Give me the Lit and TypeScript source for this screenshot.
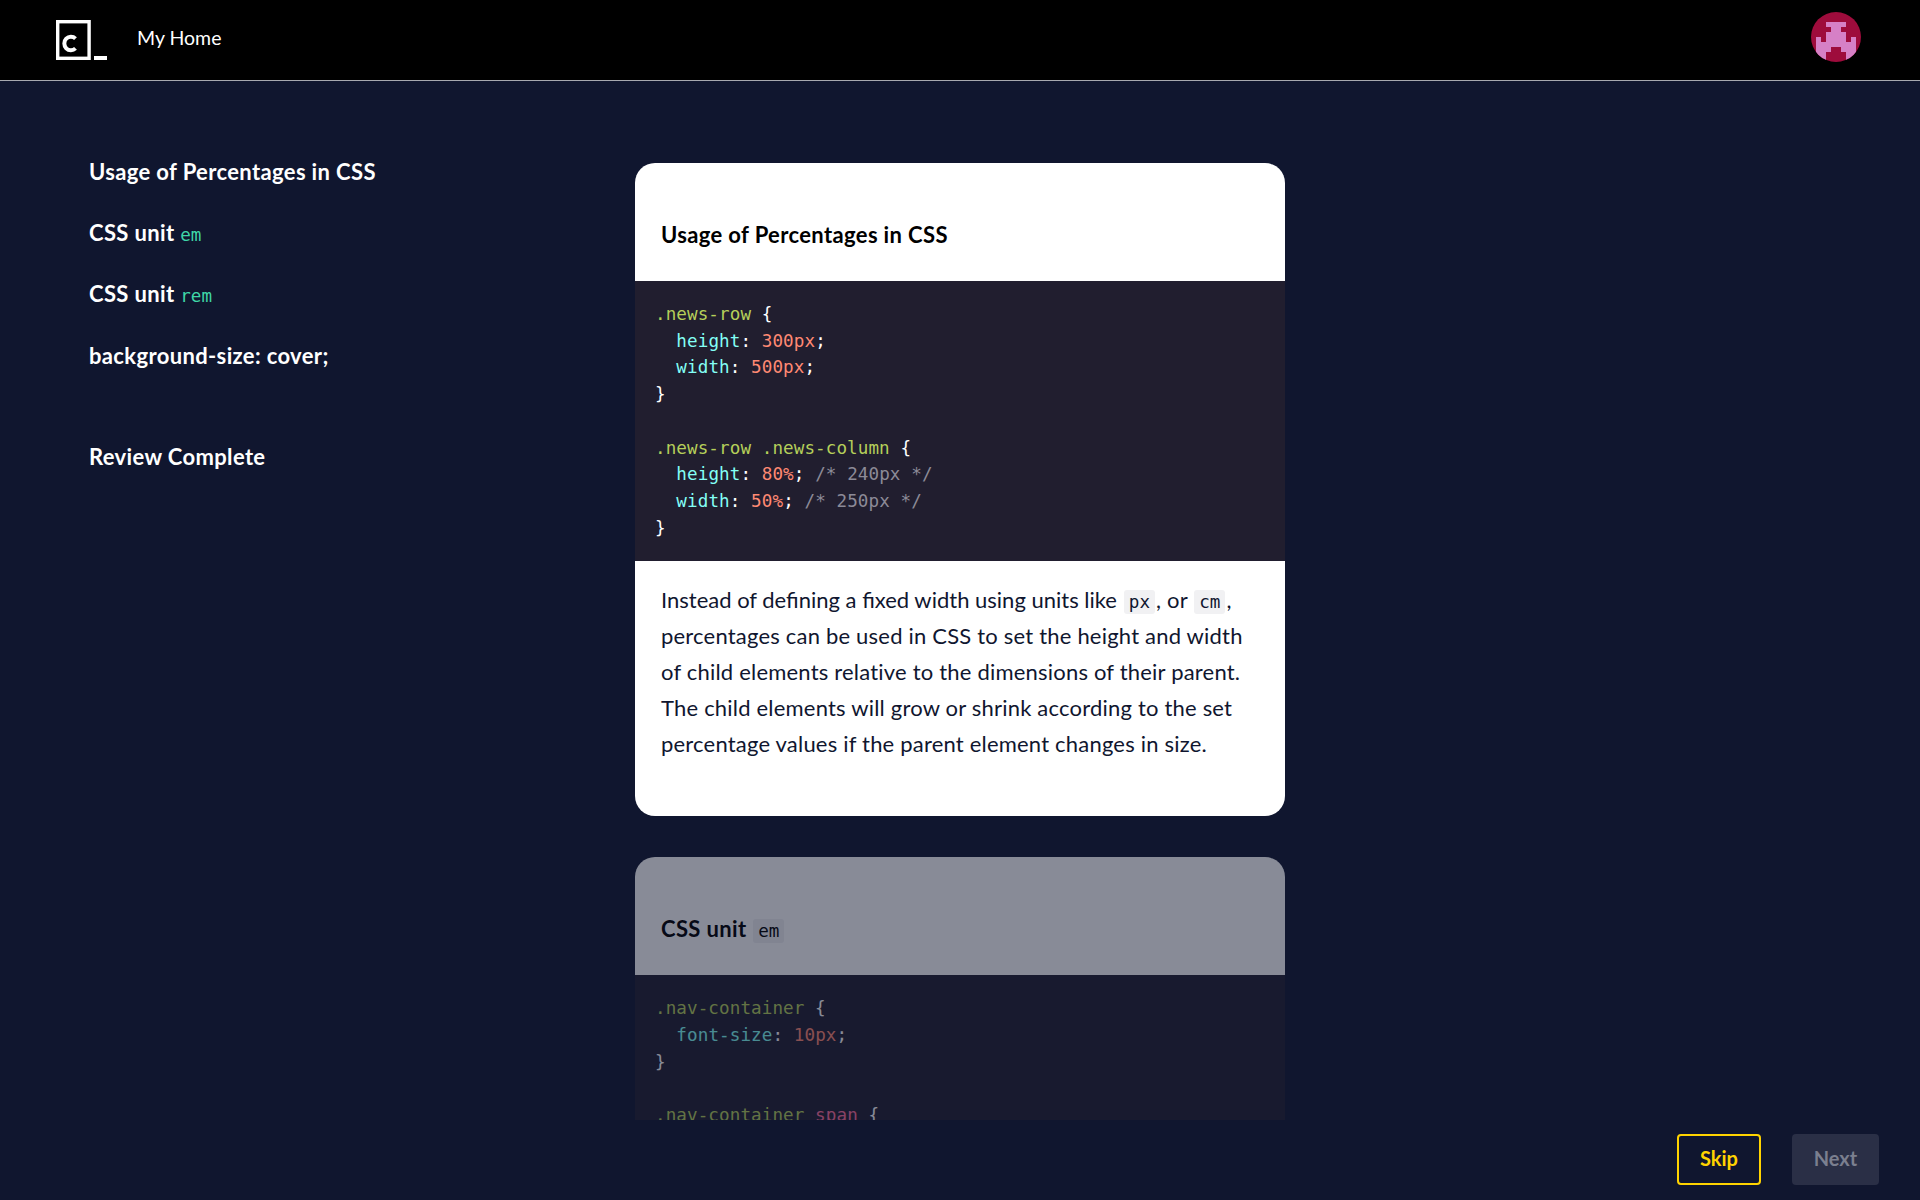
import { LitElement, html, css } from "lit";
import { customElement } from "lit/decorators.js";

const s = (c: string, t: string) => html`<span class=${c}>${t}</span>`;

@customElement("app-root")
export class AppRoot extends LitElement {
  static styles = css`
    :host {
      display: flex;
      flex-direction: column;
      height: 1200px;
      overflow: hidden;
      background: #10162f;
      font-family: "Lato", "Liberation Sans", sans-serif;
      color: #fff;
    }
    header {
      flex: none;
      height: 74px;
      border-bottom: 1px solid #a8a9b0;
      background: #000;
      display: flex;
      align-items: center;
      justify-content: space-between;
      padding: 0 59px 6px 56px;
    }
    .brand {
      display: flex;
      align-items: center;
      gap: 30px;
      font-size: 19.5px;
    }
    .logo {
      display: block;
      margin-top: 6px;
    }
    .avatar {
      display: block;
    }
    .content {
      flex: none;
      height: 1039px;
      display: flex;
      overflow: hidden;
    }
    nav {
      flex: none;
      width: 635px;
      padding: 76px 0 0 89px;
      box-sizing: border-box;
      font-size: 22px;
      font-weight: 700;
      letter-spacing: 0.36px;
    }
    nav div {
      height: 61.2px;
      line-height: 30px;
    }
    nav .review {
      margin-top: 40.5px;
    }
    nav code {
      font-family: "DejaVu Sans Mono", monospace;
      font-size: 17.6px;
      font-weight: 400;
      letter-spacing: 0;
      color: #3fd6a8;
    }
    main {
      flex: none;
      width: 650px;
      padding-top: 82px;
      box-sizing: border-box;
    }
    .card {
      background: #fff;
      border-radius: 20px;
      overflow: hidden;
      color: #10162f;
      margin-bottom: 41px;
    }
    .card.dim {
      opacity: 0.5;
    }
    h2 {
      margin: 0;
      height: 118px;
      box-sizing: border-box;
      padding: 57px 26px 0;
      font-size: 22px;
      line-height: 30px;
      font-weight: 700;
      letter-spacing: 0.36px;
      color: #000;
    }
    h2 code,
    p code {
      font-family: "DejaVu Sans Mono", monospace;
      font-size: 17.6px;
      line-height: 1;
      font-weight: 400;
      letter-spacing: 0;
      background: rgba(16, 22, 47, 0.06);
      padding: 2px 5px;
      border-radius: 3px;
      margin: 0 1px;
    }
    pre {
      margin: 0;
      background: #211e2f;
      color: #fff;
      padding: 20px 20px;
      font-family: "DejaVu Sans Mono", monospace;
      font-size: 17.6px;
      letter-spacing: 0.08px;
      line-height: 26.7px;
    }
    .sel { color: #b5cf5a; }
    .prop { color: #83fff5; }
    .val { color: #ff8973; }
    .tag { color: #ff6f9c; }
    .com { color: #8c8a97; }
    .body {
      padding: 21px 40px 55px 26px;
      font-size: 22px;
      line-height: 35.8px;
      letter-spacing: 0.2px;
    }
    .lead {
      letter-spacing: 0;
    }
    p {
      margin: 0;
    }
    .bar {
      flex: 1;
      display: flex;
      justify-content: flex-end;
      align-items: flex-start;
      gap: 31px;
      padding: 14px 41px 0 0;
    }
    .btn {
      height: 51px;
      box-sizing: border-box;
      display: flex;
      align-items: center;
      justify-content: center;
      border-radius: 4px;
      font-size: 20px;
      font-weight: 700;
      padding-bottom: 3px;
    }
    .skip {
      width: 84px;
      border: 2px solid #ffd300;
      color: #ffd300;
    }
    .next {
      width: 87px;
      background: #2a2f46;
      color: #7b7f8f;
    }
  `;

  render() {
    return html`
      <header>
        <div class="brand">
          <svg class="logo" width="51" height="40" viewBox="0 0 51 40">
            <rect x="1.7" y="1.7" width="31.4" height="36.6" fill="none" stroke="#fff" stroke-width="3.4" />
            <path d="M19.5 18.6A6.6 6.8 0 1 0 19.5 28.4" fill="none" stroke="#fff" stroke-width="4" />
            <rect x="38" y="36" width="13" height="4" fill="#fff" />
          </svg>
          <span>My Home</span>
        </div>
        <svg class="avatar" width="50" height="50" viewBox="0 0 50 50">
          <defs>
            <clipPath id="av"><circle cx="25" cy="25" r="25" /></clipPath>
          </defs>
          <circle cx="25" cy="25" r="25" fill="#9e0c3c" />
          <path
            clip-path="url(#av)"
            fill="#d680c6"
            d="M15 10H35V15H30V20H35V30H40V25H45V50H35V40H30V35H20V40H15V50H5V25H10V30H15V20H20V15H15Z"
          />
        </svg>
      </header>
      <div class="content">
        <nav>
          <div>Usage of Percentages in CSS</div>
          <div>CSS unit <code>em</code></div>
          <div>CSS unit <code>rem</code></div>
          <div>background-size: cover;</div>
          <div class="review">Review Complete</div>
        </nav>
        <main>
          <section class="card">
            <h2>Usage of Percentages in CSS</h2>
            <pre>${s("sel", ".news-row")} {
  ${s("prop", "height")}: ${s("val", "300px")};
  ${s("prop", "width")}: ${s("val", "500px")};
}

${s("sel", ".news-row .news-column")} {
  ${s("prop", "height")}: ${s("val", "80%")}; ${s("com", "/* 240px */")}
  ${s("prop", "width")}: ${s("val", "50%")}; ${s("com", "/* 250px */")}
}</pre>
            <div class="body">
              <p>
                <span class="lead">Instead of defining a fixed width using units like</span> <code>px</code>, or <code>cm</code>,
                percentages can be used in CSS to set the height and width of child elements relative to
                the dimensions of their parent. The child elements will grow or shrink according to the
                set percentage values if the parent element changes in size.
              </p>
            </div>
          </section>
          <section class="card dim">
            <h2>CSS unit <code>em</code></h2>
            <pre>${s("sel", ".nav-container")} {
  ${s("prop", "font-size")}: ${s("val", "10px")};
}

${s("sel", ".nav-container")} ${s("tag", "span")} {
  ${s("prop", "font-size")}: ${s("val", "2em")};
}</pre>
          </section>
        </main>
      </div>
      <div class="bar">
        <div class="btn skip">Skip</div>
        <div class="btn next">Next</div>
      </div>
    `;
  }
}
